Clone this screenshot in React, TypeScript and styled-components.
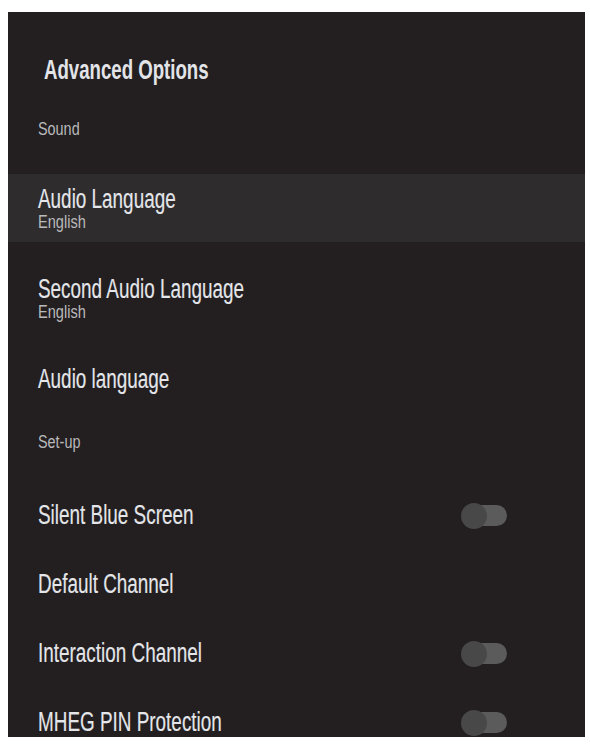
import React from 'react';
import styled, { createGlobalStyle } from 'styled-components';

const GlobalStyle = createGlobalStyle`
	html, body {
		margin: 0;
		padding: 0;
		background: #ffffff;
	}
	body {
		font-family: 'Liberation Sans', Arial, sans-serif;
	}
`;

type Item =
	| { kind: 'section'; label: string; height: number }
	| { kind: 'row'; title: string; value?: string; toggle?: boolean; focused?: boolean; height: number; gap?: number };

const items: Item[] = [
	{ kind: 'section', label: 'Sound', height: 89 },
	{ kind: 'row', title: 'Audio Language', value: 'English', focused: true, height: 68, gap: 22 },
	{ kind: 'row', title: 'Second Audio Language', value: 'English', height: 68, gap: 22 },
	{ kind: 'row', title: 'Audio language', height: 50 },
	{ kind: 'section', label: 'Set-up', height: 77 },
	{ kind: 'row', title: 'Silent Blue Screen', toggle: true, height: 69 },
	{ kind: 'row', title: 'Default Channel', height: 69 },
	{ kind: 'row', title: 'Interaction Channel', toggle: true, height: 69 },
	{ kind: 'row', title: 'MHEG PIN Protection', toggle: true, height: 69 },
];

const App: React.FC = () => {
	return (
		<>
			<GlobalStyle />
			<Panel>
				<Title>
					<Narrow $scale={0.69}>Advanced Options</Narrow>
				</Title>
				{items.map((item, i) =>
					item.kind === 'section' ? (
						<SectionLabel key={i} $height={item.height}>
							<Narrow $scale={0.8}>{item.label}</Narrow>
						</SectionLabel>
					) : (
						<Row key={i} $height={item.height} $gap={item.gap ?? 0} $focused={!!item.focused}>
							<RowText>
								<RowTitle>
									<Narrow $scale={0.7}>{item.title}</Narrow>
								</RowTitle>
								{item.value ? (
									<RowValue>
										<Narrow $scale={0.81}>{item.value}</Narrow>
									</RowValue>
								) : null}
							</RowText>
							{item.toggle ? (
								<Toggle>
									<Knob />
								</Toggle>
							) : null}
						</Row>
					)
				)}
			</Panel>
		</>
	);
};

// condensed look: no narrow family is installed, so squeeze the glyphs
const Narrow = styled.span<{ $scale: number }>`
	display: inline-block;
	white-space: nowrap;
	transform: scaleX(${(props) => props.$scale});
	transform-origin: left center;
`;

const Panel = styled.div`
	width: 577px;
	height: 725px;
	margin: 12px 0 0 8px;
	padding-top: 43px;
	box-sizing: border-box;
	background: #231f20;
	overflow: hidden;
	display: flex;
	flex-direction: column;
`;

const Title = styled.div`
	padding-left: 36px;
	font-size: 27px;
	line-height: 30px;
	font-weight: bold;
	color: #e2e4e8;
`;

const SectionLabel = styled.div<{ $height: number }>`
	height: ${(props) => props.$height}px;
	flex-shrink: 0;
	display: flex;
	align-items: center;
	padding-left: 30px;
	font-size: 18px;
	color: #b9b9bb;
`;

const Row = styled.div<{ $height: number; $gap: number; $focused: boolean }>`
	height: ${(props) => props.$height}px;
	margin-bottom: ${(props) => props.$gap}px;
	flex-shrink: 0;
	display: flex;
	align-items: center;
	justify-content: space-between;
	padding: 0 78px 0 30px;
	background: ${(props) => (props.$focused ? '#2e2c2d' : 'transparent')};
`;

const RowText = styled.div`
	display: flex;
	flex-direction: column;
`;

const RowTitle = styled.div`
	font-size: 27px;
	line-height: 27px;
	color: #e4e6ea;
	-webkit-text-stroke: 0.15px #e4e6ea;
`;

const RowValue = styled.div`
	font-size: 18px;
	line-height: 18px;
	color: #b9b9bb;
`;

const Toggle = styled.div`
	position: relative;
	width: 42px;
	height: 21px;
	border-radius: 11px;
	background: #5b5b5b;
`;

const Knob = styled.div`
	position: absolute;
	left: -4px;
	top: -2px;
	width: 26px;
	height: 26px;
	border-radius: 50%;
	background: #484848;
`;

export default App;
